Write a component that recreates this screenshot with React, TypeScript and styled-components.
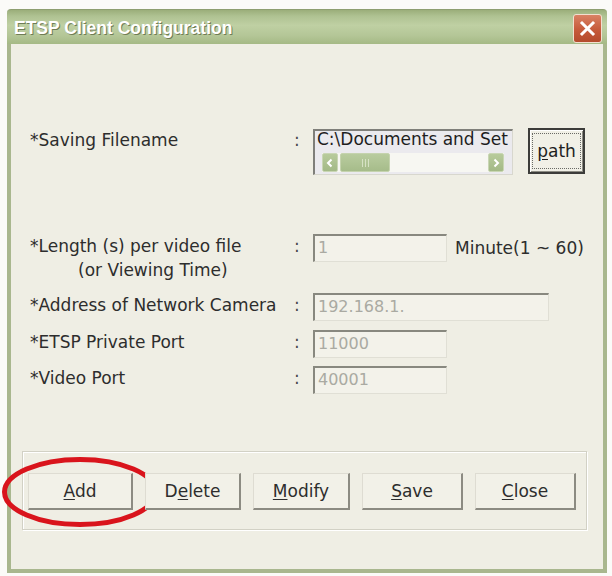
import React from 'react';
import styled, { createGlobalStyle } from 'styled-components';

const Global = createGlobalStyle`
  html, body { margin: 0; padding: 0; background: #fbfbf8; }
  body {
    width: 612px;
    height: 576px;
    overflow: hidden;
    font-family: "DejaVu Sans", Verdana, sans-serif;
  }
`;

const Window = styled.div`
  margin: 9px 0 0 7px;
  width: 600px;
  height: 564px;
  display: flex;
  flex-direction: column;
`;

const TitleBar = styled.div`
  height: 35px;
  flex: none;
  box-sizing: border-box;
  display: flex;
  align-items: center;
  justify-content: space-between;
  padding: 0 5px 0 7px;
  border-radius: 4px 4px 0 0;
  background: linear-gradient(
    to bottom,
    #9bae7a 0%,
    #afc292 18%,
    #bfd0a3 45%,
    #b4c697 75%,
    #a5b985 100%
  );
  border-top: 1px solid #8e9f70;
`;

const Title = styled.span`
  font-family: "Liberation Sans", Arial, sans-serif;
  font-weight: bold;
  font-size: 17.5px;
  color: #ffffff;
  text-shadow: 1px 1px 0 #6f7c55;
  margin-top: 2px;
`;

const CloseButton = styled.div`
  width: 29px;
  height: 29px;
  margin-top: 2px;
  box-sizing: border-box;
  border: 1px solid #f2dfcf;
  border-radius: 3px;
  background: linear-gradient(to bottom, #d98264 0%, #c65a3a 55%, #b44b2d 100%);
  display: flex;
  align-items: center;
  justify-content: center;
`;

const Body = styled.div`
  flex: 1;
  box-sizing: border-box;
  background: #efeee4;
  border: 4px solid #a9b78e;
  border-top: none;
  display: flex;
  flex-direction: column;
`;

const Form = styled.div`
  padding-left: 19px;
  display: flex;
  flex-direction: column;
`;

const Row = styled.div<{ $mt: number }>`
  display: grid;
  grid-template-columns: 264px 19px auto;
  align-items: start;
  margin-top: ${(p) => p.$mt}px;
`;

const Label = styled.div`
  font-size: 17px;
  line-height: 24px;
  color: #2d2d2d;
  white-space: nowrap;
`;

const SubLine = styled.span`
  display: block;
  padding-left: 48px;
`;

const Colon = styled.div`
  font-size: 17px;
  line-height: 24px;
  color: #4a4a4a;
`;

const FieldCell = styled.div<{ $top?: boolean }>`
  display: flex;
  align-items: ${(p) => (p.$top ? 'flex-start' : 'center')};
`;

const Field = styled.div<{ $w: number }>`
  width: ${(p) => p.$w}px;
  height: 28px;
  box-sizing: border-box;
  border-style: solid;
  border-width: 2px 1px 1px 2px;
  border-color: #88887f #e0dfd5 #e0dfd5 #88887f;
  background: #f3f2ea;
  padding-left: 3px;
  font-size: 16px;
  line-height: 24px;
  color: #aaaaa2;
`;

const Unit = styled.span`
  margin-left: 8px;
  font-size: 17px;
  line-height: 24px;
  color: #2d2d2d;
`;

const FileBox = styled.div`
  width: 200px;
  margin-top: 1px;
  box-sizing: border-box;
  border-style: solid;
  border-width: 2px 1px 1px 2px;
  border-color: #7f7f7a #d8d7ce #d8d7ce #7f7f7a;
  background: #ebeaee;
  padding: 0 0 2px 0;
`;

const FileText = styled.div`
  padding-left: 2px;
  font-size: 17px;
  line-height: 17px;
  height: 17px;
  color: #1e1e1e;
  white-space: nowrap;
`;

const ScrollTrack = styled.div`
  margin: 5px 8px 0 7px;
  height: 19px;
  display: flex;
  align-items: stretch;
  background: #f7f7f2;
`;

const ScrollArrow = styled.div`
  width: 16px;
  box-sizing: border-box;
  border: 1px solid #c9d6b4;
  border-radius: 2px;
  background: linear-gradient(to bottom, #b8cb9c, #a3b986);
  display: flex;
  align-items: center;
  justify-content: center;
`;

const ScrollThumb = styled.div`
  width: 50px;
  margin-left: 2px;
  box-sizing: border-box;
  border: 1px solid #c5d3ae;
  border-radius: 2px;
  background: linear-gradient(to bottom, #b9cc9f, #a6bc8a);
  display: flex;
  align-items: center;
  justify-content: center;
`;

const ScrollSpacer = styled.div`
  flex: 1;
`;

const PathButton = styled.button`
  width: 57px;
  height: 46px;
  margin-left: 15px;
  padding: 0;
  box-sizing: border-box;
  border: 2px solid #3c3c3a;
  background: #f1f0e7;
  box-shadow: inset 1px 1px 0 #ffffff, inset -1px -1px 0 #8d8c84;
  display: flex;
  align-items: stretch;
  justify-content: stretch;
  font-family: "DejaVu Sans", Verdana, sans-serif;
  font-size: 17px;
  color: #1e1e1e;
`;

const FocusRing = styled.span`
  flex: 1;
  margin: 3px 2px;
  border: 1px dotted #6a6a66;
  display: flex;
  align-items: center;
  justify-content: center;
`;

const Group = styled.div`
  margin: 57px 16px 0 11px;
  border: 1px solid #d2d1c5;
  box-shadow: inset 1px 1px 0 #ffffff, 1px 1px 0 #ffffff;
  padding: 21px 0 19px 5px;
  display: flex;
  gap: 12px;
`;

const ButtonSlot = styled.div`
  position: relative;
  display: flex;
`;

const Button = styled.button<{ $w: number }>`
  width: ${(p) => p.$w}px;
  height: 37px;
  box-sizing: border-box;
  padding: 0;
  border-style: solid;
  border-width: 1px 2px 2px 1px;
  border-color: #dedcd2 #8c8b82 #8c8b82 #dedcd2;
  background: #f2f1e8;
  font-family: "DejaVu Sans", Verdana, sans-serif;
  font-size: 17px;
  color: #2d2d2d;
`;

const Key = styled.span`
  text-decoration: underline;
  text-underline-offset: 2px;
`;

const Highlight = styled.svg`
  position: absolute;
  left: -28px;
  top: -17px;
  width: 160px;
  height: 74px;
  pointer-events: none;
  overflow: visible;
`;

const Chevron = ({ dir }: { dir: 'l' | 'r' }) => (
  <svg width="8" height="10" viewBox="0 0 8 10">
    <path
      d={dir === 'l' ? 'M5.5 1.5 L2 5 L5.5 8.5' : 'M2.5 1.5 L6 5 L2.5 8.5'}
      fill="none"
      stroke="#ffffff"
      strokeWidth="2"
    />
  </svg>
);

const Grip = () => (
  <svg width="9" height="8" viewBox="0 0 9 8">
    <path d="M1.5 0 V8 M4.5 0 V8 M7.5 0 V8" stroke="#d6e2c4" strokeWidth="1" />
  </svg>
);

const buttons: { label: string; key: number; w: number }[] = [
  { label: 'Delete', key: 1, w: 96 },
  { label: 'Modify', key: 0, w: 97 },
  { label: 'Save', key: 0, w: 101 },
  { label: 'Close', key: 0, w: 101 },
];

const Accel = ({ text, k }: { text: string; k: number }) => (
  <>
    {text.slice(0, k)}
    <Key>{text[k]}</Key>
    {text.slice(k + 1)}
  </>
);

export default function App() {
  return (
    <>
      <Global />
      <Window>
        <TitleBar>
          <Title>ETSP Client Configuration</Title>
          <CloseButton>
            <svg width="17" height="17" viewBox="0 0 17 17">
              <path d="M3 3 L14 14 M14 3 L3 14" stroke="#ffffff" strokeWidth="3" strokeLinecap="square" />
            </svg>
          </CloseButton>
        </TitleBar>
        <Body>
          <Form>
            <Row $mt={84}>
              <Label>*Saving Filename</Label>
              <Colon>:</Colon>
              <FieldCell $top>
                <FileBox>
                  <FileText>C:\Documents and Set</FileText>
                  <ScrollTrack>
                    <ScrollArrow>
                      <Chevron dir="l" />
                    </ScrollArrow>
                    <ScrollThumb>
                      <Grip />
                    </ScrollThumb>
                    <ScrollSpacer />
                    <ScrollArrow>
                      <Chevron dir="r" />
                    </ScrollArrow>
                  </ScrollTrack>
                </FileBox>
                <PathButton>
                  <FocusRing>
                    <Accel text="path" k={0} />
                  </FocusRing>
                </PathButton>
              </FieldCell>
            </Row>
            <Row $mt={59}>
              <Label>
                *Length (s) per video file
                <SubLine>(or Viewing Time)</SubLine>
              </Label>
              <Colon>:</Colon>
              <FieldCell>
                <Field $w={134}>1</Field>
                <Unit>Minute(1 ~ 60)</Unit>
              </FieldCell>
            </Row>
            <Row $mt={11}>
              <Label>*Address of Network Camera</Label>
              <Colon>:</Colon>
              <FieldCell>
                <Field $w={236}>192.168.1.</Field>
              </FieldCell>
            </Row>
            <Row $mt={9}>
              <Label>*ETSP Private Port</Label>
              <Colon>:</Colon>
              <FieldCell>
                <Field $w={134}>11000</Field>
              </FieldCell>
            </Row>
            <Row $mt={8}>
              <Label>*Video Port</Label>
              <Colon>:</Colon>
              <FieldCell>
                <Field $w={134}>40001</Field>
              </FieldCell>
            </Row>
          </Form>
          <Group>
            <ButtonSlot>
              <Button $w={105}>
                <Accel text="Add" k={0} />
              </Button>
              <Highlight viewBox="0 0 160 74">
                <ellipse cx="80" cy="36" rx="75.5" ry="32.5" fill="none" stroke="#d9141c" strokeWidth="5" />
              </Highlight>
            </ButtonSlot>
            {buttons.map((b) => (
              <ButtonSlot key={b.label}>
                <Button $w={b.w}>
                  <Accel text={b.label} k={b.key} />
                </Button>
              </ButtonSlot>
            ))}
          </Group>
        </Body>
      </Window>
    </>
  );
}
